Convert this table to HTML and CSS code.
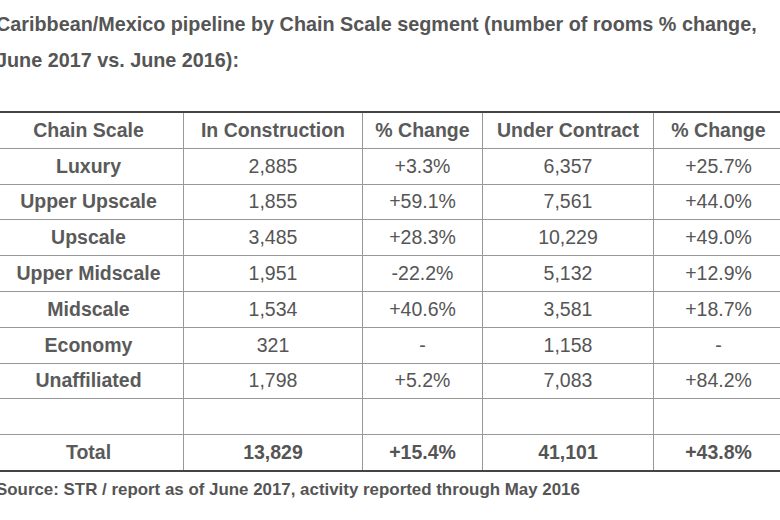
FILE: index.html
```html
<!DOCTYPE html>
<html>
<head>
<meta charset="utf-8">
<link rel="stylesheet" href="styles.css">
</head>
<body>
<div class="page">
  <p class="title">Caribbean/Mexico pipeline by Chain Scale segment (number of rooms % change, June 2017 vs. June 2016):</p>
  <table class="pipeline">
    <colgroup>
      <col class="c1"><col class="c2"><col class="c3"><col class="c4"><col class="c5">
    </colgroup>
    <thead>
      <tr><th>Chain Scale</th><th>In Construction</th><th>% Change</th><th>Under Contract</th><th>% Change</th></tr>
    </thead>
    <tbody>
      <tr><th>Luxury</th><td>2,885</td><td>+3.3%</td><td>6,357</td><td>+25.7%</td></tr>
      <tr><th>Upper Upscale</th><td>1,855</td><td>+59.1%</td><td>7,561</td><td>+44.0%</td></tr>
      <tr><th>Upscale</th><td>3,485</td><td>+28.3%</td><td>10,229</td><td>+49.0%</td></tr>
      <tr><th>Upper Midscale</th><td>1,951</td><td>-22.2%</td><td>5,132</td><td>+12.9%</td></tr>
      <tr><th>Midscale</th><td>1,534</td><td>+40.6%</td><td>3,581</td><td>+18.7%</td></tr>
      <tr><th>Economy</th><td>321</td><td>-</td><td>1,158</td><td>-</td></tr>
      <tr><th>Unaffiliated</th><td>1,798</td><td>+5.2%</td><td>7,083</td><td>+84.2%</td></tr>
      <tr><th></th><td></td><td></td><td></td><td></td></tr>
      <tr class="total"><th>Total</th><td>13,829</td><td>+15.4%</td><td>41,101</td><td>+43.8%</td></tr>
    </tbody>
  </table>
  <p class="source">Source: STR / report as of June 2017, activity reported through May 2016</p>
</div>
</body>
</html>
```

FILE: styles.css
```css
html, body {
  margin: 0;
  padding: 0;
  background: #fff;
}
body {
  width: 780px;
  height: 520px;
  overflow: hidden;
  font-family: "Liberation Sans", Arial, sans-serif;
  color: #555;
}
.page {
  margin-left: -4px;
  width: 800px;
}
.title {
  margin: 0;
  padding-top: 7px;
  max-width: 775px;
  font-size: 19.8px;
  font-weight: bold;
  line-height: 35.5px;
  color: #555;
}
.pipeline {
  margin-top: 33px;
  margin-left: -3px;
  border-collapse: collapse;
  table-layout: fixed;
  width: 790px;
  font-size: 19.5px;
  border-top: 2px solid #444;
  border-bottom: 2px solid #444;
}
.c1 { width: 190px; }
.c2 { width: 179px; }
.c3 { width: 120px; }
.c4 { width: 171px; }
.c5 { width: 130px; }
.pipeline th,
.pipeline td {
  height: 34.8px;
  padding: 0;
  text-align: center;
  vertical-align: middle;
  border: 1px solid #999;
  color: #555;
}
.pipeline thead th {
  border-top: none;
}
.pipeline th {
  font-weight: bold;
  color: #5a5a5a;
}
.pipeline td {
  font-weight: normal;
}
.pipeline .total td,
.pipeline .total th {
  font-weight: bold;
  border-bottom: none;
}
.source {
  margin: 6px 0 0 0;
  font-size: 16.9px;
  font-weight: bold;
  line-height: 24px;
  color: #555;
}
```
